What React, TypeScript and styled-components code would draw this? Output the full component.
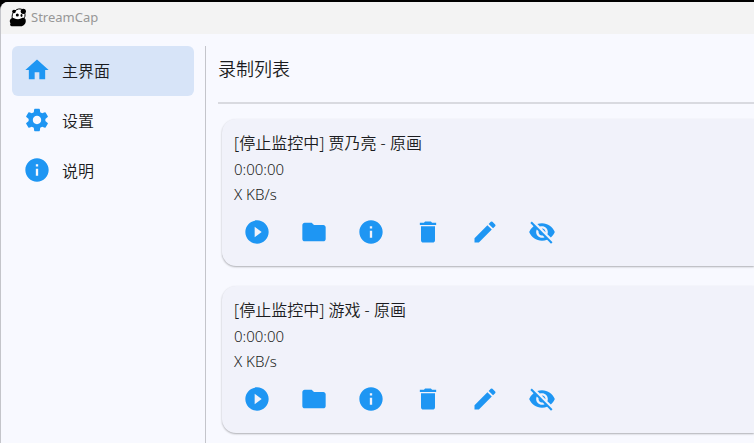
import React from "react";
import styled, { createGlobalStyle } from "styled-components";
import type { IconType } from "react-icons";
import {
  MdDelete,
  MdEdit,
  MdFolder,
  MdHome,
  MdInfo,
  MdPlayCircleFilled,
  MdSettings,
  MdVisibilityOff,
} from "react-icons/md";

const GlobalStyle = createGlobalStyle`
  * { box-sizing: border-box; }
  body {
    margin: 0;
    background: #000;
    color: #1b1c21;
    font-family: "Noto Sans", "Noto Sans CJK SC", sans-serif;
    font-weight: 350;
  }
  button { font: inherit; color: inherit; }
`;

const Window = styled.div`
  min-height: calc(100vh - 2px);
  margin-top: 2px;
  display: flex;
  flex-direction: column;
  background: #f8f9ff;
  border-left: 1px solid #c4c5ca;
  border-top-left-radius: 8px;
  overflow: hidden;
`;

const TitleBar = styled.header`
  display: flex;
  align-items: center;
  gap: 4px;
  height: 32px;
  padding: 0 8px 2px;
  background: #f3f3f3;
  color: #979797;
  font-size: 13px;
  font-weight: 400;
`;

const Body = styled.div`
  flex: 1;
  display: flex;
  padding-top: 12px;
`;

const Sidebar = styled.nav`
  flex: none;
  display: flex;
  flex-direction: column;
  width: 204px;
  padding: 0 11px;
`;

const NavItem = styled.button<{ $active?: boolean }>`
  display: flex;
  align-items: center;
  gap: 11px;
  height: 50px;
  padding: 0 11px 2px;
  border: 0;
  border-radius: 6px;
  background: ${(p) => (p.$active ? "#d7e4f8" : "transparent")};
  font-size: 16px;
  text-align: left;
  cursor: pointer;

  svg { color: #1e96f3; }
`;

const Main = styled.main`
  flex: 1;
  min-width: 0;
  padding-left: 12px;
  border-left: 1px solid #c4c5cb;
`;

const Heading = styled.h1`
  margin: 0;
  padding: 10px 0 19px;
  border-bottom: 2px solid #d9dae0;
  font-size: 18px;
  line-height: 27px;
  font-weight: 350;
`;

const CardList = styled.div`
  display: flex;
  flex-direction: column;
  gap: 20px;
  padding: 15px 0 8px 4px;
`;

const Card = styled.article`
  padding: 10px 12px;
  border-radius: 14px 0 0 14px;
  background: #f1f2fa;
  box-shadow: 0 1px 2px rgba(0, 0, 0, 0.3);
`;

const CardTitle = styled.h2`
  margin: 0;
  font-size: 16px;
  line-height: 28px;
  font-weight: 350;
`;

const CardText = styled.p`
  margin: 0;
  font-size: 15px;
  line-height: 25px;
`;

const Actions = styled.div`
  display: flex;
  gap: 12px;
  padding: 3px 0 2px;
`;

const IconButton = styled.button`
  display: grid;
  place-items: center;
  width: 45px;
  height: 44px;
  padding: 0;
  border: 0;
  border-radius: 50%;
  background: transparent;
  cursor: pointer;

  svg { color: #1e96f3; }
`;

const PandaLogo = () => (
  <svg width="18" height="20" viewBox="0 0 18 20" aria-hidden="true">
    <path d="M3.500 12 3.500 7 6 3.500 10 2l4 1.500L16 7l-1 4-3 2.500H7z" fill="#fff" />
    <path
      d="M1 13c.8-2 2.500-2.500 4-1.800 2.500 1.200 5.500 1.400 8-.1 1.500-.9 3.200 0 3.700 1.700.6 3-1 5.500-3.900 6.500H2.500c-1.500-.5-1.700-2-1-3C.8 15.500.6 14 1 13z"
      fill="#000"
    />
    <path d="M3.300 11.500C2.800 9 3.300 6.500 5 4.500L8 2.500c2-.9 4-.7 5.500.3" fill="none" stroke="#000" />
    <path d="M15.700 6c.8 2.500.3 4.500-1.700 6" fill="none" stroke="#000" />
    <circle cx="5" cy="4.500" r="1.800" fill="#000" />
    <circle cx="14.300" cy="4.300" r="2.600" fill="#000" />
    <ellipse cx="8.300" cy="8" rx="1.500" ry="1.500" fill="#000" />
    <ellipse cx="12.500" cy="8.500" rx="1" ry="1.400" fill="#000" />
  </svg>
);

const navigation: { label: string; icon: IconType }[] = [
  { label: "主界面", icon: MdHome },
  { label: "设置", icon: MdSettings },
  { label: "说明", icon: MdInfo },
];

const actions: { label: string; icon: IconType }[] = [
  { label: "开始", icon: MdPlayCircleFilled },
  { label: "打开文件夹", icon: MdFolder },
  { label: "详情", icon: MdInfo },
  { label: "删除", icon: MdDelete },
  { label: "编辑", icon: MdEdit },
  { label: "停止监控", icon: MdVisibilityOff },
];

const recordings = [
  { title: "[停止监控中] 贾乃亮 - 原画", duration: "0:00:00", speed: "X KB/s" },
  { title: "[停止监控中] 游戏 - 原画", duration: "0:00:00", speed: "X KB/s" },
];

export default function App() {
  return (
    <>
      <GlobalStyle />
      <Window>
        <TitleBar>
          <PandaLogo />
          StreamCap
        </TitleBar>
        <Body>
          <Sidebar>
            {navigation.map(({ label, icon: Icon }, index) => (
              <NavItem key={label} type="button" $active={index === 0}>
                <Icon size={28} aria-hidden="true" />
                {label}
              </NavItem>
            ))}
          </Sidebar>
          <Main>
            <Heading>录制列表</Heading>
            <CardList>
              {recordings.map((item) => (
                <Card key={item.title}>
                  <CardTitle>{item.title}</CardTitle>
                  <CardText>{item.duration}</CardText>
                  <CardText>{item.speed}</CardText>
                  <Actions>
                    {actions.map(({ label, icon: Icon }) => (
                      <IconButton key={label} type="button" aria-label={label}>
                        <Icon size={28} aria-hidden="true" />
                      </IconButton>
                    ))}
                  </Actions>
                </Card>
              ))}
            </CardList>
          </Main>
        </Body>
      </Window>
    </>
  );
}
